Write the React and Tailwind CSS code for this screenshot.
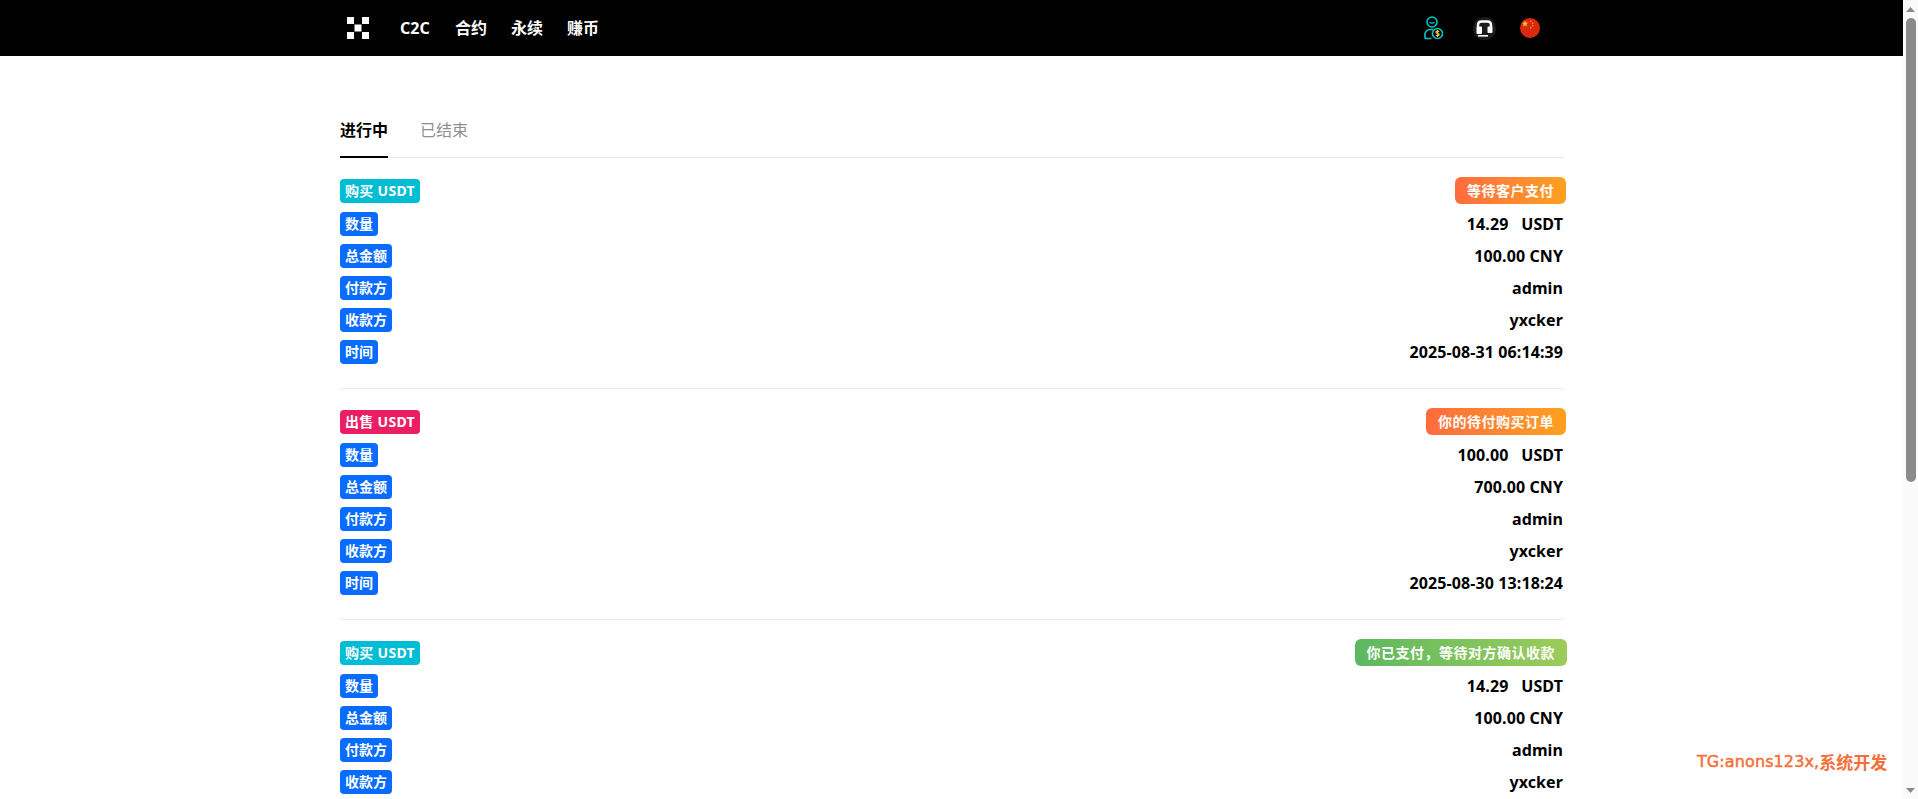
const orders = [
  { type: '购买 USDT', typeBg: 'bg-[#00bcd4]', status: '等待客户支付', mr: '-mr-[2px]', grad: 'from-[#ff6b3d] to-[#ffa01e]', qty: '14.29', total: '100.00 CNY', time: '2025-08-31 06:14:39' },
  { type: '出售 USDT', typeBg: 'bg-[#e91e63]', status: '你的待付购买订单', mr: '-mr-[2px]', grad: 'from-[#ff6b3d] to-[#ffa01e]', qty: '100.00', total: '700.00 CNY', time: '2025-08-30 13:18:24' },
  { type: '购买 USDT', typeBg: 'bg-[#00bcd4]', status: '你已支付，等待对方确认收款', mr: '-mr-[3px]', grad: 'from-[#5cb860] to-[#9ccc5a]', qty: '14.29', total: '100.00 CNY' },
];

function Logo() {
  return (
    <svg width="22" height="22" viewBox="0 0 22 22" fill="#fff" className="block">
      <rect x="0" y="0" width="7" height="7" />
      <rect x="15" y="0" width="7" height="7" />
      <rect x="7.5" y="7.5" width="7" height="7" />
      <rect x="0" y="15" width="7" height="7" />
      <rect x="15" y="15" width="7" height="7" />
    </svg>
  );
}

function UserIcon() {
  return (
    <svg width="20" height="24" viewBox="0 0 20 24" fill="none" className="block">
      <circle cx="8" cy="6" r="5" stroke="#00c4cc" strokeWidth="1.6" />
      <path d="M5.6 6.2c.8 1.3 4 1.3 4.8 0" stroke="#00c4cc" strokeWidth="1.3" />
      <path d="M1 22.5v-3.5c0-3.2 2-5.5 5-5.5h3M1 22.5h6.5" stroke="#00c4cc" strokeWidth="1.6" />
      <circle cx="13.5" cy="17.5" r="5" stroke="#00c4cc" strokeWidth="1.6" />
      <path d="M15.2 15.8c-1-1-3.3-.8-3.3.5 0 1.5 3.3.8 3.3 2.3 0 1.3-2.4 1.5-3.4.5M13.5 14v7" stroke="#f5c518" strokeWidth="1.2" />
    </svg>
  );
}

function Headset() {
  return (
    <svg width="23" height="23" viewBox="0 0 23 23" className="block">
      <circle cx="11.5" cy="11.5" r="11.5" fill="#1c1c1c" />
      <path d="M5 10V8Q5 4.5 8.5 4.5H14.5Q18 4.5 18 8V10" fill="none" stroke="#fff" strokeWidth="2.4" />
      <rect x="3.5" y="9.5" width="5.5" height="7.5" rx="1" fill="#fff" />
      <rect x="14.5" y="9.5" width="5" height="6.5" rx="1" fill="#fff" />
      <rect x="5" y="18" width="10" height="1.6" fill="#fff" />
    </svg>
  );
}

function Flag() {
  return (
    <svg width="20" height="20" viewBox="0 0 20 20" className="block">
      <circle cx="10" cy="10" r="10" fill="#d9290f" />
      <polygon points="5,2.5 5.9,4.6 8,4.8 6.4,6.2 7,8.4 5,7.2 3,8.4 3.6,6.2 2,4.8 4.1,4.6" fill="#f7c325" />
      <rect x="10" y="2.5" width="1.5" height="1.5" fill="#e8851c" />
      <rect x="12" y="4.5" width="1.5" height="1.5" fill="#e8851c" />
      <rect x="12" y="7" width="1.5" height="1.5" fill="#e8851c" />
      <rect x="10" y="9" width="1.5" height="1.5" fill="#e8851c" />
    </svg>
  );
}

function Tag({ children, bg = 'bg-[#0a6cff]', extra = '' }) {
  return (
    <span className={`inline-flex h-6 items-center rounded-[4px] px-[5px] text-[14px] font-bold leading-6 text-white ${bg} ${extra}`}>
      {children}
    </span>
  );
}

function Row({ label, value }) {
  return (
    <div className="mt-2 flex h-6 items-center justify-between">
      <Tag>{label}</Tag>
      <span className="pr-px text-[16px] font-bold leading-6 tracking-[0.1px] text-black whitespace-pre">{value}</span>
    </div>
  );
}

function Order({ o }) {
  return (
    <section className="border-b border-[#ebebeb] pt-[19px] pb-6">
      <div className="flex h-[27px] items-center justify-between">
        <Tag bg={o.typeBg} extra="tracking-[0.3px]">{o.type}</Tag>
        <span className={`inline-flex h-[27px] items-center rounded-[6px] bg-gradient-to-r px-3 text-[14px] font-bold tracking-[0.5px] text-[#fff] ${o.grad} ${o.mr}`}>
          {o.status}
        </span>
      </div>
      <Row label="数量" value={`${o.qty}\u00a0\u00a0\u00a0USDT`} />
      <Row label="总金额" value={o.total} />
      <Row label="付款方" value="admin" />
      <Row label="收款方" value="yxcker" />
      {o.time && <Row label="时间" value={o.time} />}
    </section>
  );
}

function Scrollbar() {
  return (
    <div className="flex h-[799px] w-[15px] shrink-0 flex-col items-center bg-[#fafafa]">
      <div className="flex h-[18px] w-full items-center justify-center">
        <svg width="9" height="5" viewBox="0 0 9 5"><polygon points="4.5,0 9,5 0,5" fill="#8a8a8a" /></svg>
      </div>
      <div className="h-[464px] w-[10px] rounded-[5px] bg-[#8a8a8a]" />
      <div className="flex-1" />
      <div className="flex h-[18px] w-full items-center justify-center">
        <svg width="9" height="5" viewBox="0 0 9 5"><polygon points="0,0 9,0 4.5,5" fill="#8a8a8a" /></svg>
      </div>
    </div>
  );
}

export default function App() {
  return (
    <div className="relative flex h-[799px] overflow-hidden bg-white font-['Noto_Sans','Noto_Sans_CJK_SC',sans-serif]">
      <div className="min-w-0 flex-1">
        <header className="flex h-14 items-center bg-black pl-[347px] pr-[363px] text-white">
          <Logo />
          <nav className="ml-[31px] flex items-center gap-[24px] text-[16px] font-bold">
            <span className="w-[31px] whitespace-nowrap">C2C</span>
            <span>合约</span>
            <span>永续</span>
            <span>赚币</span>
          </nav>
          <div className="ml-auto flex items-center">
            <UserIcon />
            <div className="ml-[29px]"><Headset /></div>
            <div className="ml-[24px]"><Flag /></div>
          </div>
        </header>
        <main className="ml-[340px] w-[1224px]">
          <div className="mt-[44px] flex h-[58px] gap-8 border-b border-[#e8e8e8] text-[16px]">
            <div className="-mb-px flex items-center border-b-2 border-black pt-[3px] font-semibold text-black">进行中</div>
            <div className="flex items-center pt-[3px] text-[#8f8f8f]">已结束</div>
          </div>
          {orders.map((o, i) => <Order key={i} o={o} />)}
        </main>
      </div>
      <Scrollbar />
      <div className="absolute left-[1697px] top-[752px] flex items-center leading-5 text-[#f5703a]">
        <span className="font-['DejaVu_Sans',sans-serif] text-[16px] tracking-[0.1px] [-webkit-text-stroke:0.5px_#f5703a]">TG:anons123x,</span>
        <span className="font-['Noto_Sans_CJK_SC',sans-serif] text-[17px] font-semibold">系统开发</span>
      </div>
    </div>
  );
}
